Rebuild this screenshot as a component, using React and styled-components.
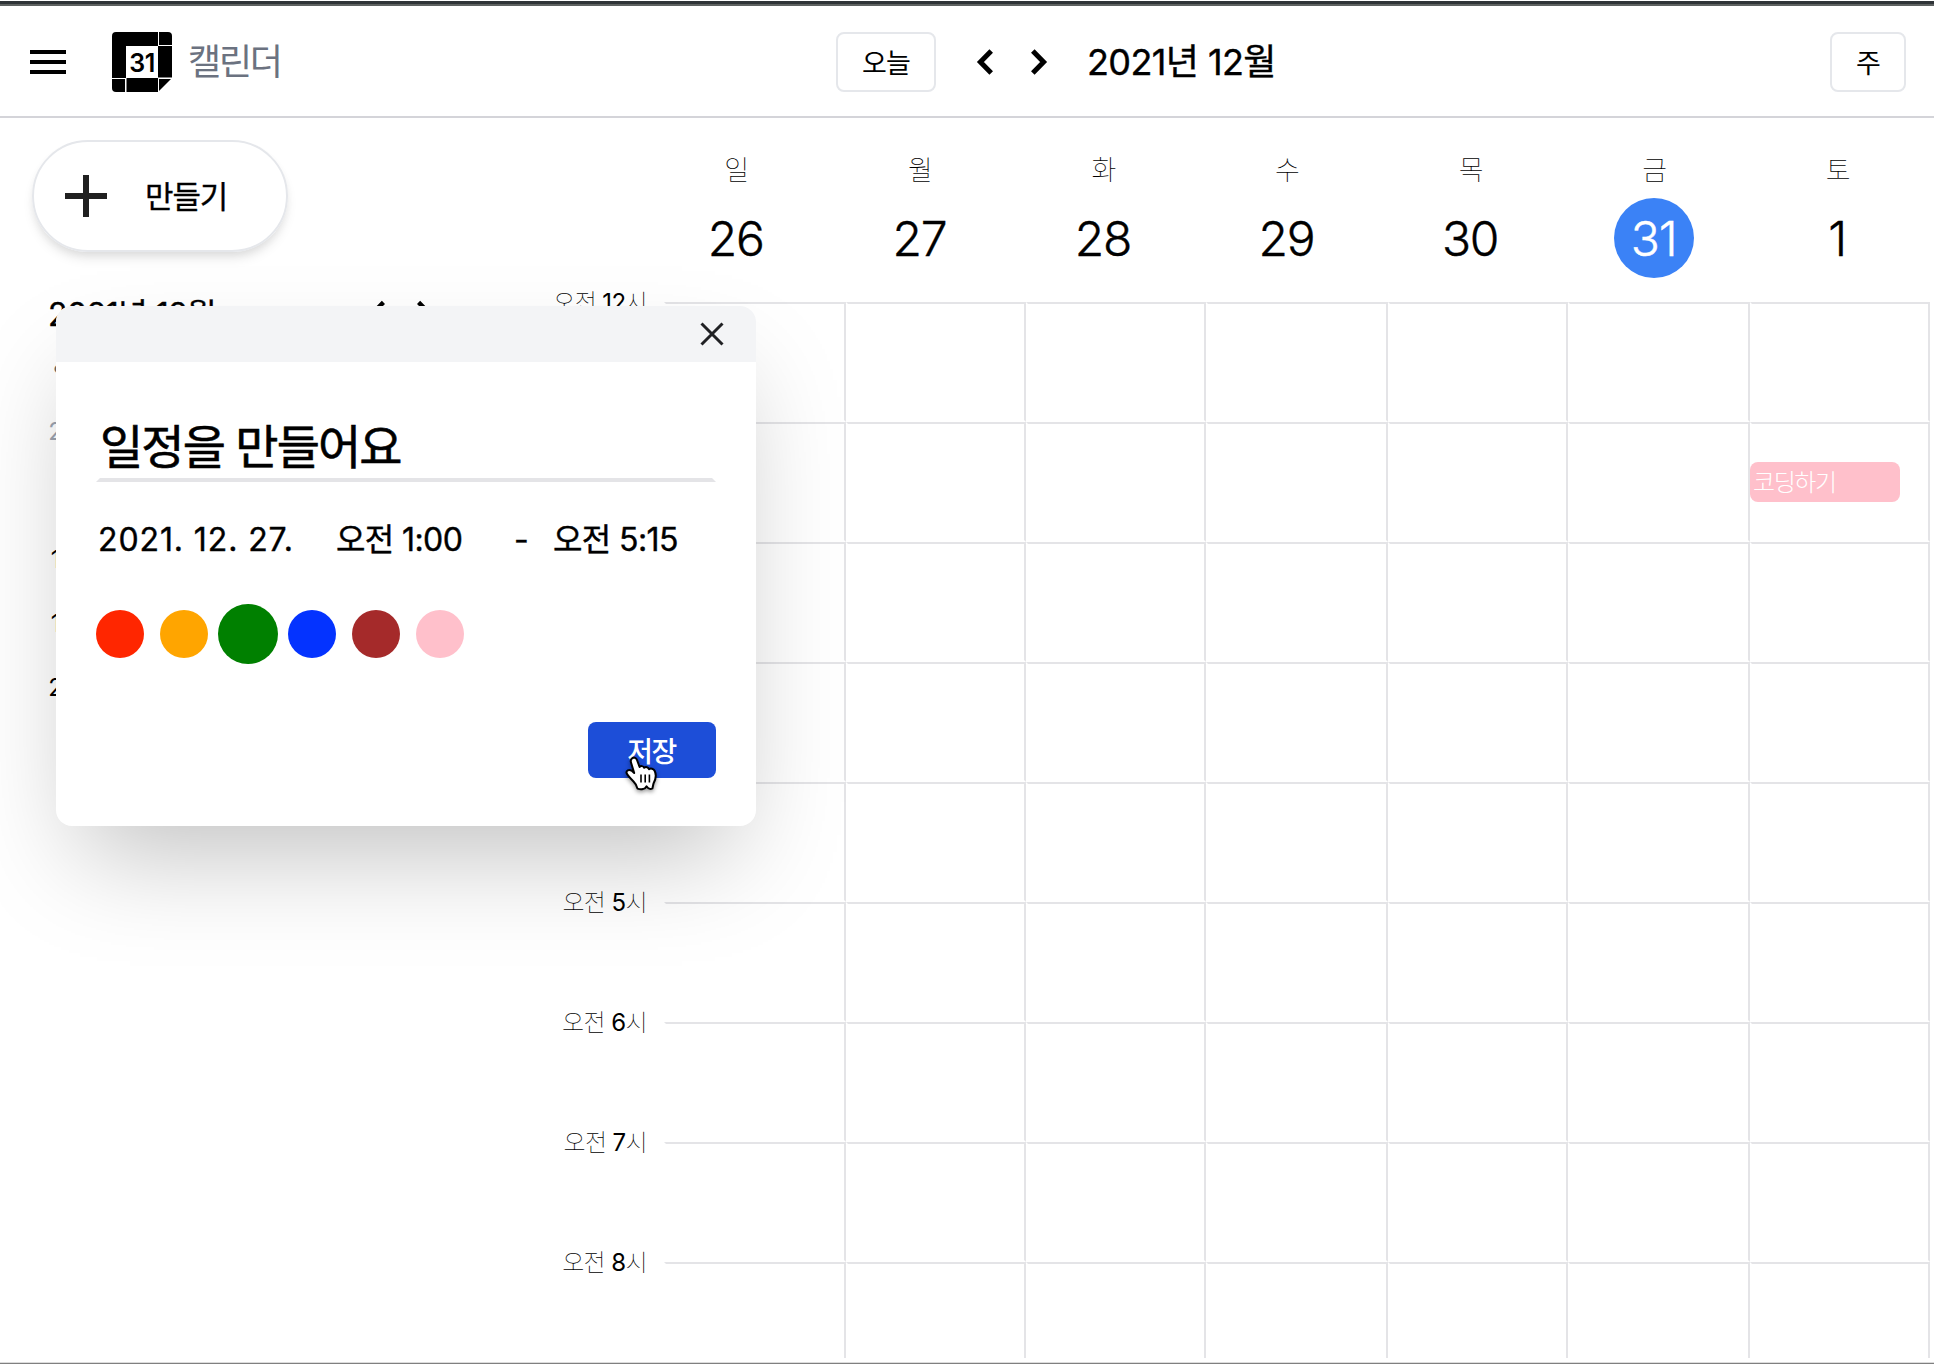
import React from 'react';
import styled, { createGlobalStyle } from 'styled-components';

const GlobalStyle = createGlobalStyle`
  *, *::before, *::after { box-sizing: border-box; }
  body {
    margin: 0;
    background: #fff;
    color: #000;
    font-family: Inter, "Noto Sans CJK KR", sans-serif;
    overflow: hidden;
  }
  button { font-family: inherit; color: inherit; background: none; border: 0; padding: 0; cursor: pointer; }
`;

const LINE = '#e4e4e7';

const Page = styled.div`
  position: relative;
  display: flex;
  flex-direction: column;
  width: 1934px;
  height: 1364px;
  padding-top: 1px;
  overflow: hidden;
`;

const WindowEdge = styled.div`
  flex: none;
  height: 5px;
  background: #2f3437;
  border-bottom: 2px solid #5d6160;
`;

const BottomEdge = styled.div`
  flex: none;
  height: 2px;
  background: #808080;
  border-top: 1px solid #dcdcdc;
`;

const Header = styled.header`
  flex: none;
  display: flex;
  align-items: center;
  height: 112px;
  padding: 2px 28px 0 24px;
  border-bottom: 2px solid #d4d4d9;
`;

const BrandGroup = styled.div`
  flex: none;
  display: flex;
  align-items: center;
  width: 812px;
`;

const PeriodGroup = styled.div`
  flex: 1;
  display: flex;
  align-items: center;
`;

const PeriodArrows = styled.div`
  display: flex;
  gap: 38px;
  margin-left: 41px;
`;

const MenuButton = styled.button`
  display: flex;
  margin-right: 40px;
`;

const Logo = styled.svg`
  display: block;
  width: 60px;
  height: 60px;
  margin-right: 16px;
`;

const Brand = styled.span`
  font-size: 36px;
  line-height: 60px;
  letter-spacing: -2.2px;
  color: #6b7280;
`;

const OutlineButton = styled.button`
  width: ${(p) => p.$width};
  height: 60px;
  border: 2px solid #e5e7eb;
  border-radius: 8px;
  padding-bottom: 2px;
  font-size: 27px;
  letter-spacing: -0.8px;
`;

const IconButton = styled.button`
  display: flex;
  align-items: center;
  justify-content: center;
  width: ${(p) => p.$width};
`;

const MonthTitle = styled.h1`
  margin: 0 0 0 40px;
  font-size: 36px;
  font-weight: 400;
  line-height: 60px;
  letter-spacing: -0.6px;
  white-space: nowrap;
  -webkit-text-stroke: 0.4px #000;
`;

const Body = styled.div`
  flex: 1;
  min-height: 0;
  display: flex;
`;

const Sidebar = styled.aside`
  width: 480px;
  padding: 22px 32px 0;
`;

const CreateButton = styled.button`
  display: flex;
  align-items: center;
  width: 256px;
  height: 112px;
  padding-left: 30px;
  border: 2px solid #e5e7eb;
  border-radius: 56px;
  font-size: 31px;
  letter-spacing: -1.1px;
  -webkit-text-stroke: 0.3px #000;
  box-shadow: 0 8px 12px -2px rgba(0, 0, 0, 0.1), 0 4px 8px -2px rgba(0, 0, 0, 0.06);

  svg { margin-right: 37px; }
  span { padding-bottom: 3px; }
`;

const MiniHeader = styled.div`
  display: flex;
  align-items: center;
  justify-content: space-between;
  height: 48px;
  margin-top: 36px;
  padding: 0 0 0 16px;
`;

const MiniTitle = styled.span`
  font-size: 32px;
  letter-spacing: -0.5px;
  -webkit-text-stroke: 0.4px #000;
`;

const MiniArrows = styled.div`
  display: flex;
  gap: 32px;
  padding-right: 17px;
`;

const MiniGrid = styled.div`
  display: grid;
  grid-template-columns: repeat(7, 56px);
  grid-template-rows: 48px;
  grid-auto-rows: 64px;
  margin-top: 16px;
  padding-left: 3px;
  font-size: 24px;
  text-align: center;
`;

const MiniDay = styled.span`
  color: ${(p) => (p.$muted ? '#9ca3af' : '#000')};
  line-height: 64px;
`;

const MiniDayName = styled.span`
  color: #666;
  font-size: 22px;
  line-height: 44px;
`;

const Week = styled.main`
  flex: 1;
  display: flex;
  flex-direction: column;
  padding-right: 4px;
`;

const DayRow = styled.div`
  flex: none;
  display: grid;
  grid-template-columns: repeat(7, 1fr);
  height: 184px;
  margin-left: 165px;
  padding-top: 32px;
`;

const Day = styled.div`
  display: flex;
  flex-direction: column;
  align-items: center;
`;

const DayName = styled.span`
  height: 40px;
  font-size: 27px;
  font-weight: 100;
  line-height: 41px;
`;

const DayNumber = styled.span`
  display: flex;
  align-items: center;
  justify-content: center;
  width: 80px;
  height: 80px;
  margin: 8px 1px 0 0;
  padding-right: 1px;
  border-radius: 50%;
  font-size: 48px;
  font-weight: 300;
  letter-spacing: -1.2px;
  background: ${(p) => (p.$today ? '#3b82f6' : 'transparent')};
  color: ${(p) => (p.$today ? '#fff' : '#000')};
  -webkit-text-stroke: 0.4px currentColor;
`;

const Timetable = styled.div`
  height: 1056px;
  display: flex;
  margin-bottom: 4px;
`;

const Hours = styled.div`
  width: 184px;
  padding-right: 17px;
  margin-top: -59px;
`;

const Hour = styled.div`
  height: 120px;
  font-size: 24px;
  font-weight: 100;
  line-height: 120px;
  text-align: right;
  white-space: nowrap;
  letter-spacing: -0.6px;

  b { font-weight: 400; }
`;

const Slots = styled.div`
  display: grid;
  grid-template-columns: 182px 180px 180px 182px 180px 182px 180px;
  grid-auto-rows: 120px;
  height: 1056px;
  overflow: hidden;
`;

const Slot = styled.div`
  border: 2px solid transparent;
  border-top-color: ${LINE};
  border-right-color: ${LINE};
`;

const EventChip = styled.div`
  width: 150px;
  height: 40px;
  margin: 38px 0 0 -2px;
  padding-left: 3px;
  border-radius: 8px;
  background: pink;
  color: #fff;
  font-size: 24px;
  font-weight: 300;
  line-height: 42px;
  letter-spacing: -1.4px;
`;

const Modal = styled.section`
  position: absolute;
  left: 56px;
  top: 306px;
  width: 700px;
  height: 520px;
  border-radius: 16px;
  background: #fff;
  box-shadow: 0 50px 100px -24px rgba(0, 0, 0, 0.25);
`;

const ModalBar = styled.div`
  display: flex;
  justify-content: flex-end;
  align-items: center;
  height: 56px;
  padding-right: 32px;
  border-radius: 16px 16px 0 0;
  background: #f3f4f6;
`;

const ModalBody = styled.div`
  display: flex;
  flex-direction: column;
  padding: 48px 40px 0;
`;

const EventTitle = styled.div`
  height: 72px;
  border: 4px solid transparent;
  border-bottom-color: ${LINE};
  font-size: 47px;
  line-height: 66px;
  letter-spacing: -1.9px;
  -webkit-text-stroke: 0.6px #000;
`;

const TimeRow = styled.div`
  display: flex;
  align-items: center;
  height: 48px;
  margin-top: 34px;
  font-size: 32px;
  line-height: 48px;
  white-space: nowrap;
  -webkit-text-stroke: 0.4px #000;
`;

const TimeField = styled.span`
  width: ${(p) => p.$width};
  padding-left: 2px;
  letter-spacing: ${(p) => p.$spacing};
`;

const Swatches = styled.div`
  display: flex;
  align-items: center;
  gap: 16px;
  height: 60px;
  margin-top: 40px;
`;

const Swatch = styled.button`
  width: 48px;
  height: 48px;
  border-radius: 50%;
  background: ${(p) => p.$color};
  transform: ${(p) => (p.$selected ? 'scale(1.25)' : 'none')};
`;

const SaveButton = styled.button`
  align-self: flex-end;
  width: 128px;
  height: 56px;
  margin-top: 58px;
  padding: 0 1px 1px 0;
  border-radius: 8px;
  background: #1d4ed8;
  color: #fff;
  font-size: 28px;
  font-weight: 500;
  letter-spacing: -1.4px;
`;

const Pointer = styled.svg`
  position: absolute;
  left: 624px;
  top: 755px;
  filter: drop-shadow(0 2px 2px rgba(0, 0, 0, 0.4));
`;

function Chevron({ right, size = 32, stroke = 5 }) {
  return (
    <svg width={size / 2} height={size} viewBox="0 0 16 32" overflow="visible">
      <path
        d={right ? 'M1.8 5 12.6 16 1.8 27' : 'M14.2 5 3.4 16 14.2 27'}
        fill="none"
        stroke="#000"
        strokeWidth={stroke}
      />
    </svg>
  );
}

const DAYS = [
  ['일', 26],
  ['월', 27],
  ['화', 28],
  ['수', 29],
  ['목', 30],
  ['금', 31],
  ['토', 1],
];
const HOURS = [12, 1, 2, 3, 4, 5, 6, 7, 8];
const MINI_DAYS = Array.from({ length: 35 }, (_, i) => {
  if (i < 3) return { id: i, label: 28 + i, muted: true };
  if (i > 33) return { id: i, label: 1, muted: true };
  return { id: i, label: i - 2, muted: false };
});
const COLORS = ['#ff2600', '#ffa500', '#008000', '#0433ff', '#a52a2a', '#ffc0cb'];

export default function App() {
  return (
    <Page>
      <GlobalStyle />
      <WindowEdge />
      <Header>
        <BrandGroup>
          <MenuButton>
            <svg width="48" height="48" viewBox="0 0 24 24">
              <path d="M3 18h18v-2H3v2zm0-5h18v-2H3v2zm0-7v2h18V6H3z" />
            </svg>
          </MenuButton>
          <Logo viewBox="0 0 60 60">
            <path d="M4 0H46V14H14V46H0V4Q0 0 4 0Z" />
            <path d="M47 0H56Q60 0 60 4V13H47Z" />
            <path d="M46 14H60V45.500H46Z" />
            <path d="M0 47H13V60H4Q0 60 0 56Z" />
            <path d="M14.500 46H46V60H14.500Z" />
            <path d="M47 47H59L47 59Z" />
            <text x="30" y="39.500" fontSize="25" fontWeight="600" textAnchor="middle" letterSpacing="-0.5">
              31
            </text>
          </Logo>
          <Brand>캘린더</Brand>
        </BrandGroup>
        <PeriodGroup>
          <OutlineButton $width="100px">오늘</OutlineButton>
          <PeriodArrows>
            <IconButton $width="16px"><Chevron /></IconButton>
            <IconButton $width="16px"><Chevron right /></IconButton>
          </PeriodArrows>
          <MonthTitle>2021년 12월</MonthTitle>
        </PeriodGroup>
        <OutlineButton $width="76px">주</OutlineButton>
      </Header>

      <Body>
        <Sidebar>
          <CreateButton>
            <svg width="44" height="44" viewBox="0 0 44 44">
              <path d="M22 1V43M1 22H43" stroke="#202020" strokeWidth="6" />
            </svg>
            <span>만들기</span>
          </CreateButton>
          <MiniHeader>
            <MiniTitle>2021년 12월</MiniTitle>
            <MiniArrows>
              <Chevron size={28} />
              <Chevron right size={28} />
            </MiniArrows>
          </MiniHeader>
          <MiniGrid>
            {DAYS.map(([name]) => (
              <MiniDayName key={name}>{name}</MiniDayName>
            ))}
            {MINI_DAYS.map((day) => (
              <MiniDay key={day.id} $muted={day.muted}>{day.label}</MiniDay>
            ))}
          </MiniGrid>
        </Sidebar>

        <Week>
          <DayRow>
            {DAYS.map(([name, number]) => (
              <Day key={name}>
                <DayName>{name}</DayName>
                <DayNumber $today={number === 31}>{number}</DayNumber>
              </Day>
            ))}
          </DayRow>
          <Timetable>
            <Hours>
              {HOURS.map((h) => (
                <Hour key={h}>오전 <b>{h}</b>시</Hour>
              ))}
            </Hours>
            <Slots>
              {HOURS.flatMap((h, r) =>
                DAYS.map(([name], c) => (
                  <Slot key={`${h}${name}`}>
                    {r === 1 && c === 6 && <EventChip>코딩하기</EventChip>}
                  </Slot>
                ))
              )}
            </Slots>
          </Timetable>
        </Week>
      </Body>
      <BottomEdge />

      <Modal>
        <ModalBar>
          <IconButton $width="24px">
            <svg width="24" height="24" viewBox="0 0 24 24">
              <path d="M1.500 1.500 22.500 22.500M22.500 1.500 1.500 22.500" stroke="#202124" strokeWidth="3" />
            </svg>
          </IconButton>
        </ModalBar>
        <ModalBody>
          <EventTitle>일정을 만들어요</EventTitle>
          <TimeRow>
            <TimeField $width="238px" $spacing="0.9px">2021. 12. 27.</TimeField>
            <TimeField $width="178px" $spacing="-0.6px">오전 1:00</TimeField>
            <TimeField $width="39px">-</TimeField>
            <TimeField $width="150px" $spacing="-0.6px">오전 5:15</TimeField>
          </TimeRow>
          <Swatches>
            {COLORS.map((color) => (
              <Swatch key={color} $color={color} $selected={color === '#008000'} />
            ))}
          </Swatches>
          <SaveButton>저장</SaveButton>
        </ModalBody>
      </Modal>

      <Pointer width="36" height="38" viewBox="0 0 36 38">
        <path
          d="M8.200 3.200C10 1.900 12.300 3 13 5L15.600 12C16.500 10.600 19.300 10.800 20.200 12.800C21.700 11.500 24.300 12 25 14.200C26.700 13 29.600 13.700 30.600 15.800C32.700 20 32 24 29.500 28.500L28.400 33.500C26.500 34.600 24.500 34.300 22.500 31.300C21.300 34.300 17 34.600 13.500 33.600C13 31 12 29 9.500 26.500C6.500 23.500 3.500 20.500 2.600 18.200C1.800 15.500 5 14 7.500 15.600L10.200 18L7 7.500C6.500 5.800 6.700 4.300 8.200 3.200Z"
          fill="#fff"
          stroke="#000"
          strokeWidth="2"
          strokeLinejoin="round"
        />
        <path d="M17 19.500V27.500M21.200 19.500V27.500M25.400 19.500V27.500" stroke="#000" strokeWidth="1.600" />
      </Pointer>
    </Page>
  );
}
